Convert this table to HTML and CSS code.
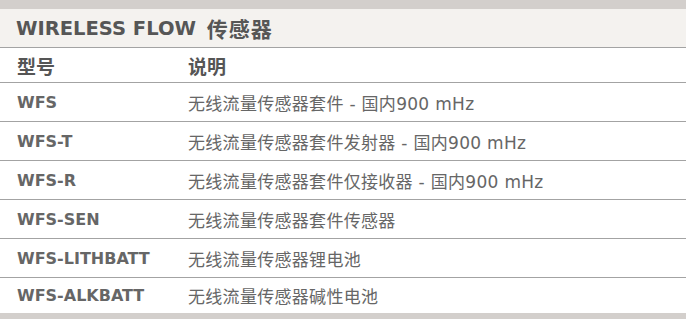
FILE: index.html
```html
<!DOCTYPE html>
<html lang="zh">
<head>
<meta charset="utf-8">
<link rel="stylesheet" href="styles.css">
</head>
<body>
<div class="table">
  <div class="band"></div>
  <div class="title">WIRELESS FLOW <span class="cjk">传感器</span></div>
  <div class="row head"><div class="c1">型号</div><div class="c2">说明</div></div>
  <div class="row"><div class="c1">WFS</div><div class="c2">无线流量传感器套件 - 国内900 mHz</div></div>
  <div class="row"><div class="c1">WFS-T</div><div class="c2">无线流量传感器套件发射器 - 国内900 mHz</div></div>
  <div class="row"><div class="c1">WFS-R</div><div class="c2">无线流量传感器套件仅接收器 - 国内900 mHz</div></div>
  <div class="row"><div class="c1">WFS-SEN</div><div class="c2">无线流量传感器套件传感器</div></div>
  <div class="row"><div class="c1">WFS-LITHBATT</div><div class="c2">无线流量传感器锂电池</div></div>
  <div class="row last"><div class="c1">WFS-ALKBATT</div><div class="c2">无线流量传感器碱性电池</div></div>
  <div class="band"></div>
</div>
</body>
</html>
```
FILE: styles.css
```css
html, body {
  margin: 0;
  padding: 0;
  background: #ffffff;
}
.table {
  width: 686px;
  display: flex;
  flex-direction: column;
  font-family: "DejaVu Sans", "Noto Sans CJK SC", sans-serif;
}
.band {
  height: 9px;
  background: #d3cfcc;
}
.title {
  height: 38px;
  background: #f4f2ef;
  border-bottom: 1px solid #a3a3a3;
  padding-left: 16px;
  display: flex;
  align-items: center;
  font-weight: bold;
  font-size: 19.5px;
  color: #565656;
  white-space: pre;
}
.title .cjk {
  font-family: "Noto Sans CJK SC", sans-serif;
  font-size: 21px;
  letter-spacing: 1px;
  margin-left: 4px;
}
.row {
  display: grid;
  grid-template-columns: 171px 1fr;
  padding-left: 17px;
  height: 38px;
  align-items: center;
  border-bottom: 1px solid #a3a3a3;
  color: #666666;
}
.row.head {
  height: 34px;
  color: #555555;
}
.row.last {
  height: 35px;
  border-bottom: none;
}
.c1 {
  font-weight: bold;
  font-size: 16px;
}
.c2 {
  font-size: 17px;
  letter-spacing: 0.3px;
  font-family: "DejaVu Sans", "Noto Sans CJK SC", sans-serif;
}
.head .c1, .head .c2 {
  font-family: "Noto Sans CJK SC", sans-serif;
  font-weight: bold;
  font-size: 19px;
  letter-spacing: 0;
}
```
